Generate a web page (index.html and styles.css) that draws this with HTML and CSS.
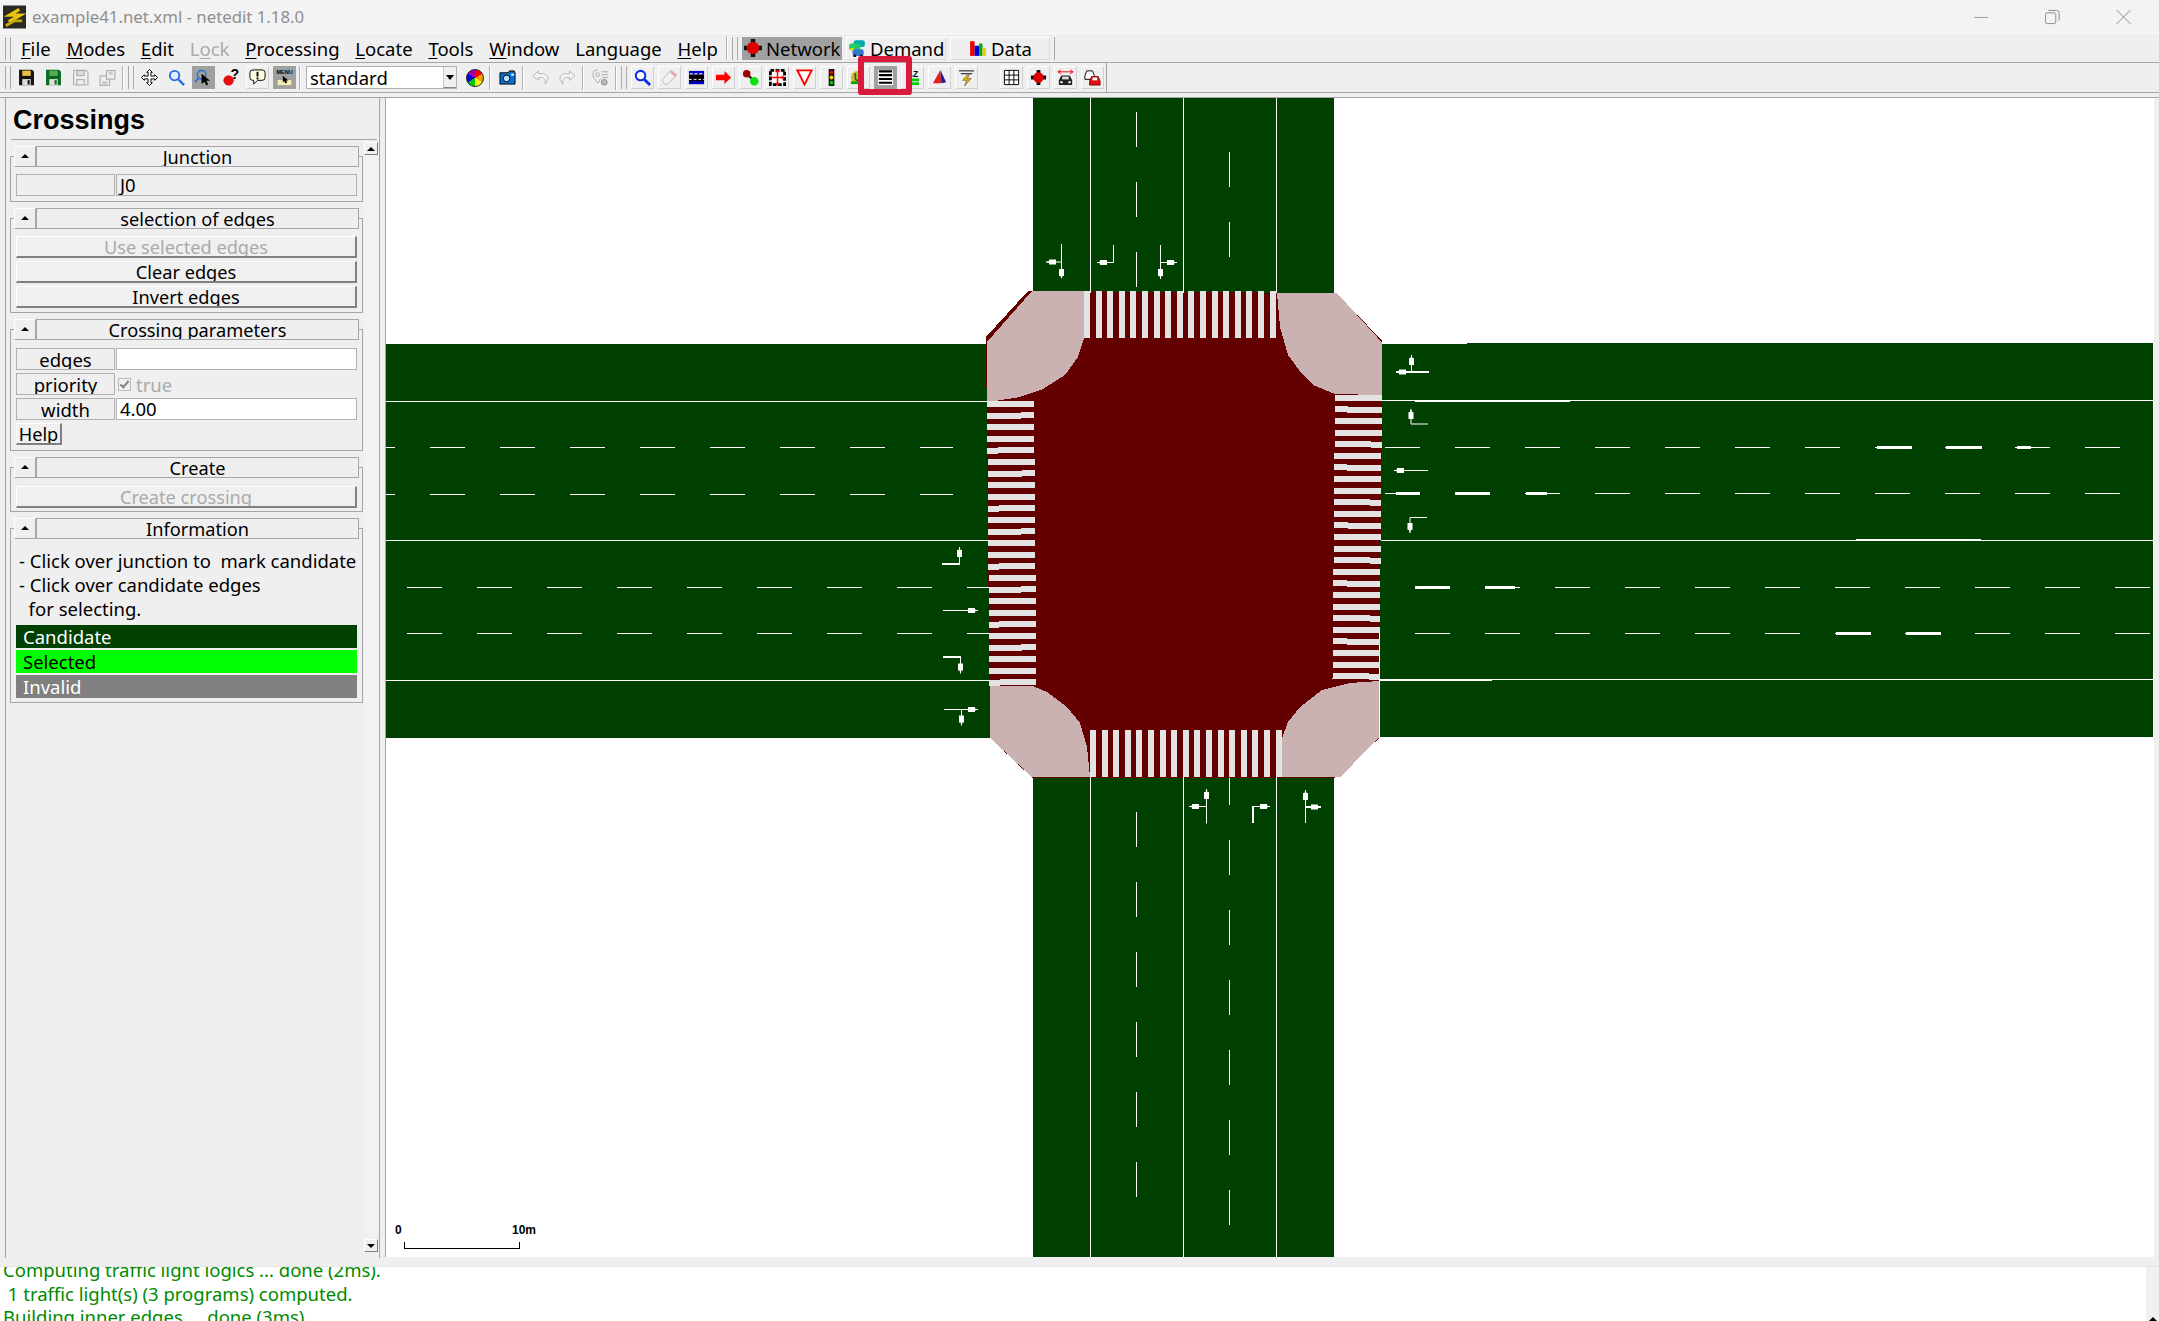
FILE: index.html
```html
<!DOCTYPE html>
<html lang="en">
<head>
  <meta charset="UTF-8">
  <title>example41.net.xml - netedit 1.18.0</title>
  <link rel="stylesheet" href="styles.css">
</head>
<body>
  <svg class="defs" width="0" height="0">
    <symbol id="floppy" viewBox="0 0 16 15">
      <path d="M1 0H13L15 2V15H1Z" fill="currentColor"/>
      <rect x="4" y="1" width="8" height="5" fill="var(--label)"/>
      <rect x="4" y="9" width="8" height="6" fill="#ddd"/>
      <rect x="9" y="10" width="2" height="4" fill="currentColor"/>
    </symbol>
    <symbol id="floppy-off" viewBox="0 0 16 15">
      <path d="M1.5 .5H13L15 2.500V14.500H1.500Z" fill="#eee" stroke="#aaa"/>
      <rect x="4.500" y="1" width="7" height="4.500" fill="#ddd" stroke="#aaa"/>
      <rect x="4.500" y="9.500" width="7" height="5" fill="#eee" stroke="#aaa"/>
    </symbol>
    <polygon id="hd" points="0,0 -3,-1 -3,-2.500 -10,-2.500 -10,2.500 -3,2.500 -3,1" fill="#fff"/>
  </svg>

  <div class="app">
    <header class="titlebar">
      <svg class="logo" viewBox="0 0 24 24">
        <rect width="24" height="24" fill="#2c2a22"/>
        <path d="M17 4L7 10H18L6 17" fill="none" stroke="#e8c40c" stroke-width="3.500"/>
        <path d="M3 21L12 16H20" fill="none" stroke="#c9a60a" stroke-width="3"/>
      </svg>
      <span class="titlebar-text">example41.net.xml - netedit 1.18.0</span>
      <div class="window-buttons">
        <svg viewBox="0 0 16 16"><path d="M0 8.500H15" stroke="#999" fill="none"/></svg>
        <svg viewBox="0 0 16 16"><rect x=".5" y="3.500" width="11" height="11.500" rx="2" stroke="#888" fill="none"/><path d="M3.500 1H12.500Q15 1 15 3.500V12" stroke="#888" fill="none"/></svg>
        <svg viewBox="0 0 16 16"><path d="M.5 .5L15.500 15.500M15.500 .5L.5 15.500" stroke="#888" fill="none"/></svg>
      </div>
    </header>

    <div class="menurow">
      <div class="grip"></div>
      <nav class="menu">
        <span><u>F</u>ile</span>
        <span><u>M</u>odes</span>
        <span><u>E</u>dit</span>
        <span class="off">L<u>o</u>ck</span>
        <span><u>P</u>rocessing</span>
        <span><u>L</u>ocate</span>
        <span><u>T</u>ools</span>
        <span><u>W</u>indow</span>
        <span>Lan<u>g</u>uage</span>
        <span><u>H</u>elp</span>
      </nav>
      <div class="sep"></div>
      <div class="grip"></div>
      <div class="supermodes">
        <div class="supermode active">
          <svg viewBox="0 0 16 16"><path d="M6 0H10V6H16V10H10V16H6V10H0V6H6Z" fill="#111"/><circle cx="8" cy="8" r="5.500" fill="#d00"/></svg>
          Network
        </div>
        <div class="supermode">
          <svg viewBox="0 0 16 16"><rect x="5" y="1" width="10" height="6" rx="2" fill="#0aa"/><rect x="1" y="4" width="10" height="6" rx="2" fill="#2c6"/><rect x="4" y="9" width="10" height="6" rx="2" fill="#37c"/><rect x="2" y="8" width="3" height="2" fill="#fc0"/><circle cx="6" cy="15" r="1.300" fill="#111"/><circle cx="12" cy="15" r="1.300" fill="#111"/></svg>
          Demand
        </div>
        <div class="supermode center">
          <svg viewBox="0 0 16 16"><rect x="1" y="2" width="4" height="13" fill="#e00"/><rect x="5" y="6" width="4" height="9" fill="#00c"/><rect x="9" y="4" width="3" height="11" fill="#0a0"/><rect x="12" y="8" width="3" height="7" fill="#ec0"/></svg>
          Data
        </div>
      </div>
    </div>

    <div class="toolrow">
      <div class="grip"></div>
      <div class="tool"><svg class="floppy-black" viewBox="0 0 16 15"><use href="#floppy"/></svg></div>
      <div class="tool"><svg class="floppy-green" viewBox="0 0 16 15"><use href="#floppy"/></svg></div>
      <div class="tool"><svg viewBox="0 0 16 15"><use href="#floppy-off"/></svg></div>
      <div class="tool"><svg viewBox="0 0 16 15"><rect x="1" y="6" width="9" height="9" fill="#eee" stroke="#aaa"/><rect x="7" y="1" width="8" height="8" fill="#eee" stroke="#aaa"/><rect x="3" y="11" width="5" height="4" fill="#ccc"/><rect x="9" y="2" width="4" height="3" fill="#ccc"/></svg></div>
      <div class="sep"></div>
      <div class="grip"></div>
      <div class="tool"><svg viewBox="0 0 18 18"><path d="M9 .5L12 3.500H10.500V7.500H14.500V6L17.500 9L14.500 12V10.500H10.500V14.500H12L9 17.500L6 14.500H7.500V10.500H3.500V12L.5 9L3.500 6V7.500H7.500V3.500H6Z" fill="#fff" stroke="#000"/></svg></div>
      <div class="tool"><svg viewBox="0 0 18 18"><circle cx="7" cy="7" r="5" fill="#dfeeff" stroke="#2a6de0" stroke-width="2"/><path d="M11 11L17 17" stroke="#2a6de0" stroke-width="2.500"/></svg></div>
      <div class="tool active"><svg viewBox="0 0 18 18"><circle cx="7" cy="6" r="4.500" fill="none" stroke="#2a6de0" stroke-width="1.500"/><path d="M3.500 10L0 14" stroke="#2a6de0" stroke-width="2"/><path d="M7 5V16L10 13.500L12 17.500L14 16.500L12 12.500H16Z" fill="#000"/></svg></div>
      <div class="tool"><svg viewBox="0 0 18 18"><circle cx="7" cy="12" r="5.500" fill="#e01010"/><text class="glyph bold" x="9" y="11" font-size="15" fill="#000">?</text></svg></div>
      <div class="tool raised"><svg viewBox="0 0 18 18"><path d="M4 1H14Q17 1 17 4V9Q17 12 14 12H9L5 16V12H4Q1 12 1 9V4Q1 1 4 1Z" fill="#ffffe0" stroke="#000"/><rect x="8" y="3" width="2" height="5" fill="#000"/><rect x="8" y="9" width="2" height="2" fill="#000"/></svg></div>
      <div class="tool active"><svg viewBox="0 0 20 20"><text class="glyph bold" x="10" y="6" font-size="6.500" text-anchor="middle" fill="#000">MENU</text><rect x="2" y="13" width="16" height="6" fill="#f5eeb0"/><path d="M8 8V16L10 14L11 17L13 16L12 13.500H14.500Z" fill="#000"/></svg></div>
      <div class="sep"></div>
      <div class="combo"><span>standard</span><div class="combo-arrow"></div></div>
      <div class="tool"><div class="wheel"></div></div>
      <div class="sep"></div>
      <div class="tool"><svg viewBox="0 0 18 16"><path d="M1 3H10L11 1H16L17 3V15H1Z" fill="#0a70d0" stroke="#000"/><circle cx="8" cy="9" r="3.500" fill="#bfe0ff" stroke="#000"/><rect x="13" y="4" width="3" height="2" fill="#fff"/></svg></div>
      <div class="sep"></div>
      <div class="tool"><svg viewBox="0 0 18 16"><path d="M1 6L7 1V4H12Q17 5 17 10L14 15Q15 8 10 8H7V11Z" fill="#f4f4f4" stroke="#b4b4b4"/></svg></div>
      <div class="tool"><svg viewBox="0 0 18 16"><path d="M17 6L11 1V4H6Q1 5 1 10L4 15Q3 8 8 8H11V11Z" fill="#f4f4f4" stroke="#b4b4b4"/></svg></div>
      <div class="sep"></div>
      <div class="tool"><svg viewBox="0 0 18 18"><path d="M6 1Q1 1 1 6Q1 9 6 15Q8 13 9 10" fill="#eee" stroke="#aaa"/><circle cx="6" cy="6" r="2" fill="none" stroke="#aaa"/><path d="M10 3H17M10 6H17M11 9H17" stroke="#aaa"/><circle cx="13" cy="14" r="3" fill="#bbb" stroke="#888"/></svg></div>
      <div class="sep"></div>
      <div class="grip"></div>
      <div class="tool raised"><svg viewBox="0 0 18 18"><circle cx="7" cy="7" r="5" fill="#fff" stroke="#0b2fe0" stroke-width="2.200"/><path d="M11 11L17 17" stroke="#0b2fe0" stroke-width="3"/></svg></div>
      <div class="tool raised"><svg viewBox="0 0 18 18"><path d="M1 12L10 2L16 7L7 16H4Z" fill="#f2f2f2" stroke="#bbb"/><path d="M9 3L11 1L17 6L15 9Z" fill="#f0a9b0"/></svg></div>
      <div class="tool raised"><svg viewBox="0 0 18 18"><rect x="1" y="2" width="16" height="4" fill="#0000c8"/><rect x="1" y="6" width="16" height="10" fill="#000"/><path d="M2 5H16M1 11H17" stroke="#fff" stroke-dasharray="3 2"/><rect x="1" y="13" width="16" height="3" fill="#0000c8"/></svg></div>
      <div class="tool raised"><svg viewBox="0 0 18 18"><path d="M1 6H10V2L17 9L10 16V12H1Z" fill="#f00"/></svg></div>
      <div class="tool raised"><svg viewBox="0 0 18 18"><path d="M5 5L13 13" stroke="#222" stroke-width="2.500"/><circle cx="5" cy="5" r="4" fill="#a00000"/><circle cx="13" cy="13" r="4.500" fill="#10e010"/></svg></div>
      <div class="tool raised"><svg viewBox="0 0 18 18"><path d="M1.500 1.500H16.500V16.500H1.500Z" fill="#fff" stroke="#000" stroke-width="3" stroke-dasharray="4 1.500"/><path d="M9 1V17M2 9H16" stroke="#f00" stroke-width="1.500"/><path d="M9 0L6.500 3.500H11.500ZM9 18L6.500 14.500H11.500ZM17 9L13.500 6.500V11.500Z" fill="#f00"/></svg></div>
      <div class="tool raised"><svg viewBox="0 0 18 18"><path d="M1.500 1.500H16.500L9 16.500Z" fill="#fff" stroke="#f00" stroke-width="2"/></svg></div>
      <div class="tool raised"><svg viewBox="0 0 18 18"><rect x="6" y="0" width="6" height="18" fill="#111"/><circle cx="9" cy="3.500" r="2" fill="#e00"/><circle cx="9" cy="9" r="2" fill="#fc0"/><circle cx="9" cy="14.500" r="2" fill="#0c0"/></svg></div>
      <div class="tool raised"><svg viewBox="0 0 18 18"><circle cx="8" cy="9" r="7" fill="#c8c020"/><rect x="1" y="13" width="14" height="3" fill="#0a0"/><text class="glyph bold" x="8" y="13" font-size="11" text-anchor="middle" fill="#063">U</text></svg></div>
      <div class="tool active"><svg viewBox="0 0 18 18"><rect x="1" y="1" width="16" height="16" fill="#fff"/><path d="M2 2.500H16M2 6.500H16M2 10.500H16M2 14.500H16" stroke="#000" stroke-width="2.200"/></svg></div>
      <div class="tool raised"><svg viewBox="0 0 18 18"><text class="glyph bold" x="9" y="8" font-size="9" text-anchor="middle" fill="#000">AZ</text><rect x="2" y="10" width="14" height="3" fill="#0c0"/><rect x="2" y="14" width="14" height="3" fill="#0c0"/></svg></div>
      <div class="tool raised"><svg viewBox="0 0 18 18"><path d="M10 1L2 15H11Z" fill="#e02020"/><path d="M10 1L16 14L11 15Z" fill="#1020a0"/></svg></div>
      <div class="tool raised"><svg viewBox="0 0 18 18"><path d="M1 2H17M3 5H15" stroke="#000"/><path d="M10 6L5 12H9L7 18L14 10H10L12 6Z" fill="#e8b000" stroke="#333" stroke-width=".5"/></svg></div>
      <div class="gap"></div>
      <div class="tool raised"><svg viewBox="0 0 18 18"><path d="M1.500 1.500H16.500V16.500H1.500ZM6.500 1.500V16.500M11.500 1.500V16.500M1.500 6.500H16.500M1.500 11.500H16.500" fill="#fff" stroke="#000"/></svg></div>
      <div class="tool raised"><svg viewBox="0 0 18 18"><path d="M7 1H11V7H17V11H11V17H7V11H1V7H7Z" fill="#111"/><circle cx="9" cy="9" r="5.500" fill="#d00"/></svg></div>
      <div class="tool raised"><svg viewBox="0 0 18 18"><path d="M1 3H17M1 3L4 1M1 3L4 5M17 3L14 1M17 3L14 5" stroke="#d00" fill="none"/><path d="M2 12L4.500 7H13.500L16 12V17H2Z" fill="#222"/><rect x="5.500" y="8" width="7" height="3" fill="#ddd"/><rect x="3.500" y="13" width="2.500" height="2" fill="#fff"/><rect x="12" y="13" width="2.500" height="2" fill="#fff"/></svg></div>
      <div class="tool raised"><svg viewBox="0 0 18 18"><path d="M1 7L3 2H9L11 7V11H1Z" fill="#fff" stroke="#000"/><path d="M6 13L8 8H15L17 13V17H6Z" fill="#e01010" stroke="#800"/><rect x="9" y="9" width="5" height="3" fill="#fff"/></svg></div>
      <div class="toolrow-end"></div>
    </div>

    <main class="workspace">
      <aside class="sidebar">
        <h2 class="frame-title">Crossings</h2>
        <div class="side-scroll">
          <div class="side-groups">
            <section class="group">
              <div class="group-head"><div class="fold"></div><div class="group-title">Junction</div></div>
              <div class="group-body top-17 bottom-5">
                <div class="param"><div class="param-label"></div><div class="param-value flat">J0</div></div>
              </div>
            </section>

            <section class="group">
              <div class="group-head"><div class="fold"></div><div class="group-title">selection of edges</div></div>
              <div class="group-body top-17">
                <div class="btn off">Use selected edges</div>
                <div class="btn">Clear edges</div>
                <div class="btn">Invert edges</div>
              </div>
            </section>

            <section class="group">
              <div class="group-head"><div class="fold"></div><div class="group-title">Crossing parameters</div></div>
              <div class="group-body bottom-5">
                <div class="param"><div class="param-label">edges</div><div class="param-value"></div></div>
                <div class="param"><div class="param-label">priority</div><div class="param-check"><span class="check"></span>true</div></div>
                <div class="param"><div class="param-label">width</div><div class="param-value">4.00</div></div>
                <div class="btn help">Help</div>
              </div>
            </section>

            <section class="group">
              <div class="group-head"><div class="fold"></div><div class="group-title">Create</div></div>
              <div class="group-body bottom-3">
                <div class="btn off">Create crossing</div>
              </div>
            </section>

            <section class="group">
              <div class="group-head"><div class="fold"></div><div class="group-title">Information</div></div>
              <div class="group-body info">
                <p>- Click over junction to&nbsp; mark candidate</p>
                <p>- Click over candidate edges</p>
                <p>&nbsp; for selecting.</p>
                <div class="legend candidate">Candidate</div>
                <div class="legend selected">Selected</div>
                <div class="legend invalid">Invalid</div>
              </div>
            </section>
          </div>
          <div class="scrollbar">
            <div class="scroll-btn"><i class="up"></i></div>
            <div class="scroll-btn"><i class="down"></i></div>
          </div>
        </div>
      </aside>

      <div class="canvas">
        <svg class="network" viewBox="386 98 1768 1159" width="1768" height="1159" shape-rendering="crispEdges">
          <!-- roads -->
          <g fill="#004000">
            <rect x="386" y="344" width="604" height="394"/>
            <rect x="1380" y="343" width="773" height="394"/>
            <rect x="1380" y="343" width="87" height="1" fill="#fff"/>
            <rect x="1033" y="98" width="301" height="195"/>
            <rect x="1033" y="777" width="301" height="480"/>
          </g>

          <!-- junction -->
          <polygon fill="#640000" points="1028,291 1336,293 1382.500,341 1382,395 1379,681 1379,738.500 1335,777.500 1032,777.500 990,738 986,337"/>
          <g fill="#cab2b2">
            <polygon points="987,342 1032,291 1085,291 1084,338 1078,357 1065,375 1043,389 1020,397 995,401 987,401"/>
            <polygon points="1337,293 1381.500,342 1381.500,395 1335,394 1313,385 1302,374 1288,355 1280,327 1277,293"/>
            <polygon points="990,686 1033,686 1047,692 1067,707 1080,723 1087,747 1090,777 1032,777 990,738"/>
            <polygon points="1379,681 1379,738 1366,750 1341,777 1282,777 1282,738 1288,722 1300,707 1322,690 1350,683"/>
          </g>

          <!-- crossings -->
          <g class="crossing">
            <path d="M1084 314.500H1276"/>
            <path d="M1090 753.500H1282"/>
            <path d="M1010.500 401L1013 686"/>
            <path d="M1358.500 395L1356 680"/>
          </g>

          <!-- lane separators -->
          <g class="lane-line">
            <path d="M386 401.500H987M386 540.500H990M386 680.500H990"/>
            <path d="M1381 400.500H2153M1381 540.500H2153M1379 679.500H2153"/>
            <path d="M1090.500 98V293M1183.500 98V293M1276.500 98V293"/>
            <path d="M1090.500 777V1257M1183.500 777V1257M1276.500 777V1257"/>
          </g>
          <g class="lane-dash">
            <path d="M430 447.500H953M430 494.500H953"/>
            <path d="M407 587.500H989M407 633.500H989"/>
            <path d="M1385 447.500H2122M1385 493.500H2122"/>
            <path d="M1415 587.500H2152M1415 633.500H2152"/>
            <path d="M1136.500 112V287"/>
            <path d="M1229.500 152V257"/>
            <path d="M1136.500 812V1230"/>
            <path d="M1229.500 778V1230" stroke-dashoffset="8"/>
          </g>
          <path class="lane-stub" d="M386 447.500H395M386 494.500H395"/>

          <!-- thicker runs where the rendering doubles a line -->
          <g fill="#fff">
            <rect x="1877" y="446" width="35" height="3"/>
            <rect x="1946" y="446" width="36" height="3"/>
            <rect x="2017" y="446" width="14" height="3"/>
            <rect x="1396" y="492" width="24" height="3"/>
            <rect x="1455" y="492" width="35" height="3"/>
            <rect x="1526" y="492" width="21" height="3"/>
            <rect x="1415" y="586" width="35" height="3"/>
            <rect x="1485" y="586" width="30" height="3"/>
            <rect x="1836" y="632" width="35" height="3"/>
            <rect x="1906" y="632" width="35" height="3"/>
            <rect x="1415" y="400" width="155" height="2"/>
            <rect x="1856" y="539" width="125" height="2"/>
            <rect x="1380" y="679" width="112" height="2"/>
          </g>

          <!-- turn arrows -->
          <g class="turn" shape-rendering="auto">
            <path d="M1061.500 244V278M1061.500 262H1046"/>
            <use href="#hd" transform="translate(1061.500 279) rotate(90)"/>
            <use href="#hd" transform="translate(1046 262) rotate(180)"/>
            <path d="M1113.500 245V262.500H1097"/>
            <use href="#hd" transform="translate(1097 262.500) rotate(180)"/>
            <path d="M1160.500 245V279M1160.500 262.500H1177"/>
            <use href="#hd" transform="translate(1160.500 279) rotate(90)"/>
            <use href="#hd" transform="translate(1177 262.500)"/>

            <path class="wide" d="M1429 372H1396"/>
            <path d="M1411.500 372V355"/>
            <use href="#hd" transform="translate(1396 372) rotate(180)"/>
            <use href="#hd" transform="translate(1411.500 355) rotate(-90)"/>
            <path d="M1428 424H1411V409"/>
            <use href="#hd" transform="translate(1411 409) rotate(-90)"/>
            <path d="M1428 470.500H1394"/>
            <use href="#hd" transform="translate(1394 470.500) rotate(180)"/>
            <path d="M1427 517.500H1410V533"/>
            <use href="#hd" transform="translate(1410 533) rotate(90)"/>

            <path class="wide" d="M942 564H960"/>
            <path d="M959.500 564V547"/>
            <use href="#hd" transform="translate(959.500 547) rotate(-90)"/>
            <path d="M943 610.500H978"/>
            <use href="#hd" transform="translate(978 610.500)"/>
            <path class="wide" d="M943 657H961"/>
            <path d="M960.500 657V673.500"/>
            <use href="#hd" transform="translate(960.500 673.500) rotate(90)"/>
            <path d="M944 709.500H978M961.500 709.500V725.500"/>
            <use href="#hd" transform="translate(978 709.500)"/>
            <use href="#hd" transform="translate(961.500 725.500) rotate(90)"/>

            <path d="M1206.500 823.500V789M1206.500 806.500H1189"/>
            <use href="#hd" transform="translate(1206.500 789) rotate(-90)"/>
            <use href="#hd" transform="translate(1189 806.500) rotate(180)"/>
            <path class="wide" d="M1253 823V806"/>
            <path d="M1252 806.500H1270"/>
            <use href="#hd" transform="translate(1270 806.500)"/>
            <path d="M1305.500 823V790"/>
            <path class="wide" d="M1305.500 807H1321"/>
            <use href="#hd" transform="translate(1305.500 790) rotate(-90)"/>
            <use href="#hd" transform="translate(1321 807)"/>
          </g>

          <!-- scale bar -->
          <text class="scale-text" x="395" y="1234">0</text>
          <text class="scale-text" x="512" y="1234">10m</text>
          <path d="M404.500 1242V1248.500H519.500V1242" fill="none" stroke="#000"/>
        </svg>
      </div>
    </main>

    <footer class="log">
      <div class="log-text">
        <p>Computing traffic light logics ... done (2ms).</p>
        <p>&nbsp;1 traffic light(s) (3 programs) computed.</p>
        <p>Building inner edges ... done (3ms).</p>
      </div>
      <div class="log-scroll"><i class="up"></i></div>
    </footer>
  </div>

  <div class="mark"></div>
</body>
</html>
```

FILE: styles.css
```css
/* General */
html, body {
  margin: 0;
  height: 100%;
  overflow: hidden;
}

body {
  font-family: "Noto Sans", sans-serif;
  font-size: 18.500px;
  color: #000;
  background-color: #efefef;
}

.defs {
  display: block;
  height: 0;
}

.app {
  display: flex;
  flex-direction: column;
  height: 1321px;
}

.app > * {
  flex: none;
}

svg text.glyph {
  font-family: "Liberation Sans", sans-serif;
}

svg text.bold {
  font-weight: bold;
}

/* Title bar */
.titlebar {
  display: flex;
  align-items: center;
  height: 34px;
  padding-left: 3px;
  background-color: #f3f3f3;
  box-sizing: border-box;
  border-bottom: 1px solid #fafafa;
}

.logo {
  width: 23px;
  height: 24px;
}

.titlebar-text {
  margin-left: 6px;
  font-size: 16.800px;
  color: #8f8f8f;
}

.window-buttons {
  display: flex;
  gap: 56px;
  margin-left: auto;
  margin-right: 28px;
}

.window-buttons svg {
  width: 15px;
  height: 16px;
}

/* Menu bar */
.menurow {
  display: flex;
  align-items: center;
  height: 29px;
  padding-left: 4px;
  box-sizing: border-box;
  border-bottom: 1px solid #a6a6a6;
}

.grip {
  flex: none;
  width: 4px;
  height: 23px;
  margin: 0 2px 0 1px;
  border-left: 1px solid #a8a8a8;
  border-right: 1px solid #a8a8a8;
}

.menu {
  display: flex;
  gap: 15.800px;
  margin-left: 8px;
  width: 704px;
}

.menu .off {
  color: #aaa;
}

.menu u {
  text-underline-offset: 2px;
}

.sep {
  flex: none;
  width: 2px;
  height: 24px;
  margin: 0 3px 0 1px;
  border-left: 1px solid #b0b0b0;
  border-right: 1px solid #fff;
  box-sizing: border-box;
}

.supermodes {
  display: flex;
  gap: 4px;
  padding: 0 4px 0 2px;
  border-right: 1px solid #a6a6a6;
}

.supermode {
  display: flex;
  align-items: center;
  gap: 4px;
  width: 100px;
  height: 23px;
  box-sizing: border-box;
  border: 1px solid #dcdcdc;
  border-top-color: #fff;
  border-left-color: #fff;
  white-space: nowrap;
}

.supermode svg {
  flex: none;
  width: 18px;
  height: 18px;
  margin-left: 1px;
}

.supermode.active {
  background-color: #a0a0a0;
  border-color: #a0a0a0;
}

.supermode.center {
  justify-content: center;
}

/* Tool bar */
.toolrow {
  display: flex;
  align-items: center;
  height: 30px;
  padding-left: 4px;
  box-sizing: border-box;
  border-bottom: 1px solid #a6a6a6;
}

.tool {
  flex: none;
  display: flex;
  align-items: center;
  justify-content: center;
  width: 27px;
  height: 23px;
  box-sizing: border-box;
}

.tool svg {
  width: 17px;
  height: 17px;
}

.tool.raised {
  margin: 0 2px;
  width: 23px;
  border: 1px solid #d0d0d0;
  border-top-color: #fff;
  border-left-color: #fff;
}

.tool.active {
  margin: 0 2px;
  width: 23px;
  background-color: #a0a0a0;
}

.floppy-black {
  color: #111;
  --label: #e8c040;
}

.floppy-green {
  color: #0a6a20;
  --label: #55aa55;
}

.combo {
  flex: none;
  display: flex;
  align-items: center;
  justify-content: space-between;
  width: 151px;
  height: 23px;
  margin: 0 4px 0 2px;
  padding-left: 3px;
  box-sizing: border-box;
  background-color: #fff;
  border: 1px solid #b0b0b0;
}

.combo-arrow {
  position: relative;
  width: 13px;
  height: 21px;
  background-color: #efefef;
  border-left: 1px solid #ccc;
  border-bottom: 1px solid #888;
  box-sizing: border-box;
}

.combo-arrow::after {
  content: "";
  position: absolute;
  top: 8px;
  left: 2px;
  border-style: solid;
  border-width: 5px 4px 0 4px;
  border-color: #000 transparent transparent transparent;
}

.wheel {
  width: 16px;
  height: 16px;
  border-radius: 50%;
  border: 1px solid #222;
  background: conic-gradient(#f00 0 60deg, #f0a000 0 120deg, #ff0 0 180deg, #0c0 0 240deg, #00d 0 300deg, #a0a 0 360deg);
}

.gap {
  flex: none;
  width: 18px;
}

.toolrow-end {
  width: 1px;
  height: 29px;
  background-color: #a6a6a6;
}

/* Main area */
.workspace {
  display: flex;
  height: 1159px;
  margin-top: 4px;
  border-top: 1px solid #a6a6a6;
}

.sidebar {
  flex: none;
  display: flex;
  flex-direction: column;
  width: 375px;
  height: 1160px;
  margin-left: 5px;
  box-sizing: border-box;
  border-left: 1px solid #a6a6a6;
  border-right: 1px solid #a6a6a6;
}

.frame-title {
  height: 41px;
  margin: 0 2px 0 5px;
  padding-left: 2px;
  font-family: "Liberation Sans", sans-serif;
  font-size: 27px;
  line-height: 44px;
  border-bottom: 1px solid #a6a6a6;
}

.side-scroll {
  display: flex;
  flex: 1;
  min-height: 0;
  padding-top: 2px;
}

.side-groups {
  width: 353px;
  margin-left: 4px;
  padding-top: 4px;
}

/* Group boxes */
.group {
  margin-bottom: 6px;
}

.group-head {
  position: relative;
  display: flex;
  height: 21px;
  margin-left: 4px;
  margin-right: 4px;
}

.fold {
  position: relative;
  flex: none;
  width: 22px;
  box-sizing: border-box;
  border-right: 1px solid #a6a6a6;
  border-bottom: 1px solid #a6a6a6;
  border-top: 1px solid #fff;
  border-left: 1px solid #fff;
  background-color: #efefef;
}

.fold::after {
  content: "";
  position: absolute;
  top: 7px;
  left: 6px;
  border-style: solid;
  border-width: 0 4px 4px 4px;
  border-color: transparent transparent #000 transparent;
}

.group-title {
  flex: 1;
  height: 21px;
  overflow: hidden;
  box-sizing: border-box;
  border: 1px solid #a6a6a6;
  background-color: #efefef;
  font-size: 18.200px;
  text-align: center;
  line-height: 20px;
}

.group-body {
  margin-top: -11px;
  padding: 18px 5px 4px;
  border: 1px solid #a6a6a6;
}

.top-17 {
  padding-top: 17px;
}

.bottom-3 {
  padding-bottom: 3px;
}

.bottom-5 {
  padding-bottom: 5px;
}

.btn {
  height: 22px;
  margin-bottom: 3px;
  overflow: hidden;
  box-sizing: border-box;
  background-color: #f0f0f0;
  border: 1px solid #fff;
  border-right: 2px solid #808080;
  border-bottom: 2px solid #808080;
  font-size: 18.200px;
  text-align: center;
  line-height: 20px;
}

.btn:last-child {
  margin-bottom: 0;
}

.btn.off {
  color: #aaa;
}

.btn.help {
  width: 46px;
}

.param {
  display: flex;
  gap: 1px;
  height: 22px;
  margin-bottom: 3px;
}

.param:last-child {
  margin-bottom: 0;
}

.param-label {
  flex: none;
  width: 99px;
  height: 22px;
  overflow: hidden;
  box-sizing: border-box;
  border: 1px solid #b0b0b0;
  text-align: center;
  line-height: 22px;
}

.param-value {
  flex: 1;
  padding-left: 3px;
  overflow: hidden;
  box-sizing: border-box;
  background-color: #fff;
  border: 1px solid #b0b0b0;
  line-height: 20px;
}

.param-value.flat {
  background-color: #efefef;
}

.param-check {
  display: flex;
  align-items: center;
  gap: 5px;
  padding-left: 2px;
  color: #aaa;
}

.check {
  position: relative;
  width: 11px;
  height: 11px;
  background-color: #efefef;
  border: 1px solid #fff;
  outline: 1px solid #bbb;
  outline-offset: -1px;
}

.check::after {
  content: "";
  position: absolute;
  top: 0;
  left: 3px;
  width: 3px;
  height: 7px;
  border-right: 2px solid #808080;
  border-bottom: 2px solid #808080;
  transform: rotate(40deg);
}

.info {
  padding-top: 20px;
}

.info p {
  margin: 0;
  height: 24px;
  padding-left: 3px;
  line-height: 24px;
  white-space: nowrap;
}

.legend {
  height: 23px;
  margin-bottom: 2px;
  padding-left: 7px;
  line-height: 23px;
}

.info p + .legend {
  margin-top: 4px;
}

.legend:last-child {
  margin-bottom: 0;
}

.candidate {
  background-color: #004000;
  color: #fff;
}

.selected {
  background-color: #00ff00;
  color: #000;
}

.invalid {
  background-color: #808080;
  color: #fff;
}

/* Scrollbars */
.scrollbar {
  flex: none;
  display: flex;
  flex-direction: column;
  justify-content: space-between;
  width: 14px;
  height: 1110px;
  margin-left: 1px;
  background: repeating-conic-gradient(#fafafa 0 25%, #eaeaea 0 50%) 0 0 / 2px 2px;
}

.scroll-btn {
  display: flex;
  align-items: center;
  justify-content: center;
  height: 13px;
  box-sizing: border-box;
  background-color: #efefef;
  border: 1px solid #fff;
  border-right-color: #808080;
  border-bottom-color: #808080;
}

.up, .down {
  display: block;
  border-style: solid;
}

.up {
  border-width: 0 4px 4px 4px;
  border-color: transparent transparent #000 transparent;
}

.down {
  border-width: 4px 4px 0 4px;
  border-color: #000 transparent transparent transparent;
}

/* Network canvas */
.canvas {
  flex: 1;
  height: 1159px;
  margin-left: 5px;
  margin-right: 5px;
  border-left: 1px solid #a6a6a6;
  background-color: #fff;
}

.network {
  display: block;
}

.crossing path {
  fill: none;
  stroke: #e3e3e3;
  stroke-width: 47;
  stroke-dasharray: 6 5.600;
}

.lane-line path {
  fill: none;
  stroke: #fff;
  stroke-width: 1;
}

.lane-dash path {
  fill: none;
  stroke: #fff;
  stroke-width: 1;
  stroke-dasharray: 35 35;
}

.lane-stub {
  fill: none;
  stroke: #fff;
  stroke-width: 1;
}

.turn path {
  fill: none;
  stroke: #fff;
  stroke-width: 1;
}

.turn path.wide {
  stroke-width: 2;
}

.scale-text {
  font-family: "Liberation Sans", sans-serif;
  font-size: 12px;
  font-weight: bold;
  fill: #000;
}

/* Message log */
.log {
  position: relative;
  height: 54px;
  margin-top: 9px;
  overflow: hidden;
  background-color: #fff;
  border-top: 1px solid #e4e4e4;
}

.log-text {
  margin-top: -9px;
  padding-left: 3px;
  color: #008a00;
  font-size: 18.500px;
  line-height: 23.500px;
}

.log-text p {
  margin: 0;
  white-space: nowrap;
}

.log-scroll {
  position: absolute;
  top: 0;
  right: 0;
  bottom: 0;
  display: flex;
  justify-content: center;
  width: 13px;
  padding-top: 8px;
  box-sizing: border-box;
  background-color: #f0f0f0;
}

/* Red annotation drawn over the tool bar */
.mark {
  position: absolute;
  left: 858px;
  top: 56px;
  width: 54px;
  height: 39px;
  box-sizing: border-box;
  border: 6px solid #d81a3c;
  border-radius: 3px;
}
```
